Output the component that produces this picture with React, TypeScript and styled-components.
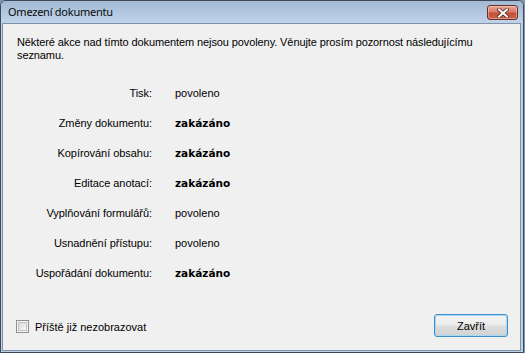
import React from "react";
import styled, { createGlobalStyle } from "styled-components";

const Global = createGlobalStyle`
  html, body { margin: 0; padding: 0; }
  body {
    background: #7f95ab;
    width: 525px;
    height: 353px;
    overflow: hidden;
  }
`;

const Window = styled.div`
  box-sizing: border-box;
  width: 524px;
  height: 353px;
  border: 1px solid #3d4957;
  border-radius: 6px 6px 0 0;
  background: #bdd2e9;
  display: flex;
  flex-direction: column;
  overflow: hidden;
`;

const TitleBar = styled.div`
  height: 21px;
  flex: none;
  display: flex;
  align-items: flex-start;
  justify-content: space-between;
  background: linear-gradient(to bottom, #a2b9d3 0%, #b3c9e1 60%, #bfd4ea 100%);
  padding: 0 5px 0 7px;
`;

const Title = styled.span`
  font-family: "Noto Sans", "DejaVu Sans", sans-serif;
  font-size: 11px;
  letter-spacing: -0.25px;
  line-height: 21px;
  color: #0a0a0a;
`;

const CloseButton = styled.div`
  box-sizing: border-box;
  width: 31px;
  height: 15px;
  margin-top: 4px;
  border: 1px solid #6b2d24;
  border-radius: 3px;
  background: linear-gradient(
    to bottom,
    #e6a796 0%,
    #d97a66 45%,
    #c54f38 55%,
    #c9614a 100%
  );
  box-shadow: inset 0 0 0 1px rgba(255, 220, 210, 0.45);
  display: flex;
  align-items: center;
  justify-content: center;
`;

const Client = styled.div`
  flex: 1;
  margin: 1px 2px 1px 1px;
  border: 1px solid #8193a8;
  background: #f0f0f0;
  display: flex;
  flex-direction: column;
  font-family: "Liberation Sans", Arial, sans-serif;
  font-size: 11px;
  color: #000;
`;

const Intro = styled.p`
  margin: 0;
  padding: 12px 14px 0 14px;
  line-height: 13px;
  letter-spacing: -0.1px;
`;

const Grid = styled.div`
  display: grid;
  grid-template-columns: 135px 1fr;
  column-gap: 23px;
  grid-auto-rows: 30px;
  align-items: center;
  padding: 16px 14px 0 14px;
`;

const Label = styled.span`
  text-align: right;
  letter-spacing: -0.05px;
`;

const Value = styled.span<{ $denied?: boolean }>`
  font-weight: ${(p) => (p.$denied ? 700 : 400)};
  font-family: ${(p) =>
    p.$denied ? '"DejaVu Sans", Verdana, sans-serif' : '"Liberation Sans", Arial, sans-serif'};
  font-size: ${(p) => (p.$denied ? "10.5px" : "11px")};
`;

const Footer = styled.div`
  margin-top: auto;
  display: flex;
  align-items: center;
  justify-content: space-between;
  padding: 0 12px 13px 13px;
`;

const CheckRow = styled.label`
  display: flex;
  align-items: center;
  gap: 6px;
  margin-top: 2px;
`;

const CheckBox = styled.span`
  box-sizing: border-box;
  width: 13px;
  height: 13px;
  border: 1px solid #8e8f8f;
  background: #f4f4f4;
  display: flex;
  padding: 1px;
`;

const CheckInner = styled.span`
  flex: 1;
  border: 1px solid #c4c4c4;
  background: linear-gradient(135deg, #d6d6d6 0%, #ececec 60%, #fbfbfb 100%);
`;

const Button = styled.button`
  box-sizing: border-box;
  width: 74px;
  height: 23px;
  border: 1px solid #3c8fcc;
  border-radius: 3px;
  background: linear-gradient(
    to bottom,
    #f4f4f4 0%,
    #ececec 48%,
    #dedede 52%,
    #d2d2d2 100%
  );
  box-shadow: inset 0 0 0 1px #a9d8f5;
  font-family: "Liberation Sans", Arial, sans-serif;
  font-size: 11px;
  color: #000;
  padding: 0;
`;

const rows: { label: string; value: string; denied: boolean }[] = [
  { label: "Tisk:", value: "povoleno", denied: false },
  { label: "Změny dokumentu:", value: "zakázáno", denied: true },
  { label: "Kopírování obsahu:", value: "zakázáno", denied: true },
  { label: "Editace anotací:", value: "zakázáno", denied: true },
  { label: "Vyplňování formulářů:", value: "povoleno", denied: false },
  { label: "Usnadnění přístupu:", value: "povoleno", denied: false },
  { label: "Uspořádání dokumentu:", value: "zakázáno", denied: true },
];

export default function App() {
  return (
    <>
      <Global />
      <Window>
        <TitleBar>
          <Title>Omezení dokumentu</Title>
          <CloseButton>
            <svg width="12" height="10" viewBox="0 0 12 10">
              <path d="M2 1.5 L10 8.5 M10 1.5 L2 8.5" stroke="#5a231b" strokeWidth="3.6" strokeLinecap="square" />
              <path d="M2 1.5 L10 8.5 M10 1.5 L2 8.5" stroke="#ffffff" strokeWidth="2" strokeLinecap="square" />
            </svg>
          </CloseButton>
        </TitleBar>
        <Client>
          <Intro>
            Některé akce nad tímto dokumentem nejsou povoleny. Věnujte prosím pozornost následujícímu
            <br />
            seznamu.
          </Intro>
          <Grid>
            {rows.map((r) => (
              <React.Fragment key={r.label}>
                <Label>{r.label}</Label>
                <Value $denied={r.denied}>{r.value}</Value>
              </React.Fragment>
            ))}
          </Grid>
          <Footer>
            <CheckRow>
              <CheckBox>
                <CheckInner />
              </CheckBox>
              Příště již nezobrazovat
            </CheckRow>
            <Button>Zavřít</Button>
          </Footer>
        </Client>
      </Window>
    </>
  );
}
